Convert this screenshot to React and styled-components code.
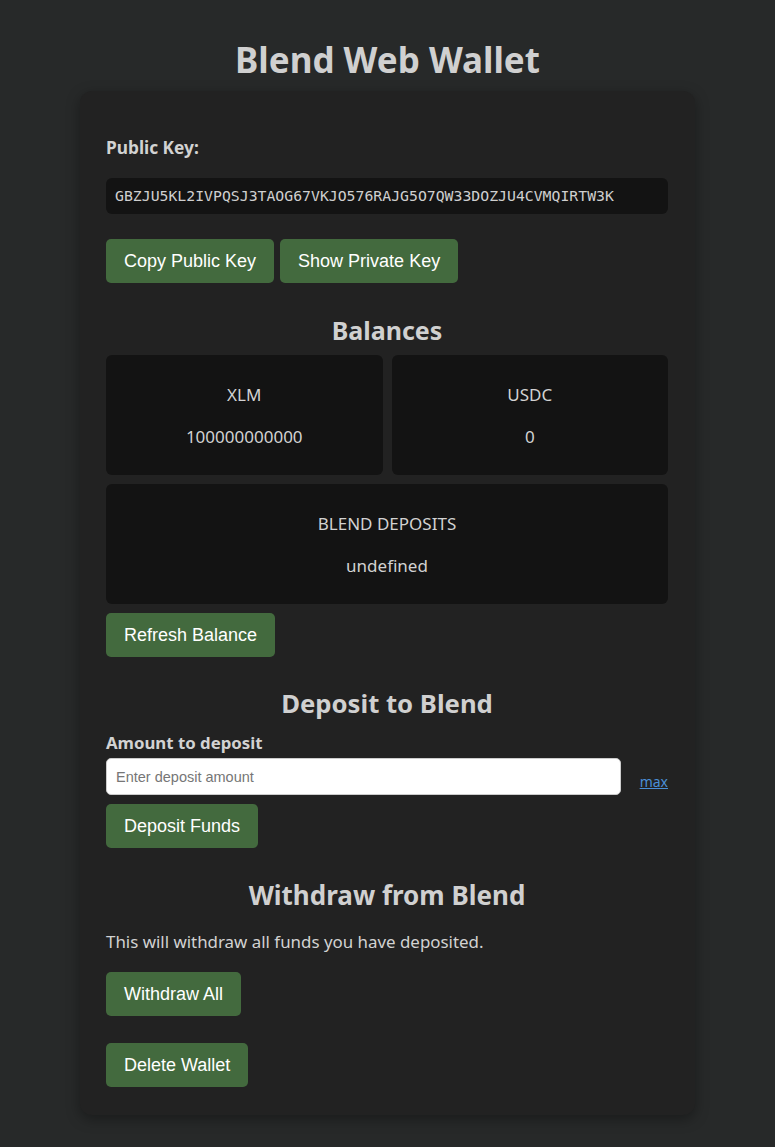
import React from "react";
import styled, { createGlobalStyle } from "styled-components";

const Global = createGlobalStyle`
  html, body { margin: 0; padding: 0; }
  body {
    background: #272929;
    color: #d2d2d2;
    font-family: "Noto Sans", "Open Sans", sans-serif;
  }
`;

const Page = styled.div`
  padding: 38px 0 34px;
  display: flex;
  flex-direction: column;
  align-items: center;
`;

const Title = styled.h1`
  margin: 0 0 9px;
  font-size: 35px;
  line-height: 44px;
  font-weight: 700;
  color: #d0d0d0;
  text-align: center;
`;

const Card = styled.main`
  box-sizing: border-box;
  width: 615px;
  background: #222222;
  border-radius: 12px;
  padding: 26px 27px 28px 26px;
  box-shadow: 0 4px 14px rgba(0, 0, 0, 0.35);
  display: flex;
  flex-direction: column;
  align-items: flex-start;
`;

const Label = styled.div`
  font-size: ${(p) => p.$size || 16.8}px;
  line-height: 22px;
  font-weight: 700;
  margin-top: ${(p) => p.$mt || 0}px;
  color: #d2d2d2;
`;

const KeyBox = styled.div`
  box-sizing: border-box;
  align-self: stretch;
  margin-top: 19px;
  background: #131313;
  border-radius: 6px;
  padding: 9px 9px;
  font-family: "DejaVu Sans Mono", "Liberation Mono", monospace;
  font-size: 14.8px;
  line-height: 18px;
  color: #cfcfcf;
`;

const ButtonRow = styled.div`
  display: flex;
  gap: 6px;
  margin-top: ${(p) => p.$mt || 0}px;
`;

const Button = styled.button`
  box-sizing: border-box;
  height: 44px;
  padding: 0 18px;
  border: none;
  border-radius: 5px;
  background: #436a3e;
  color: #ffffff;
  font-family: "Liberation Sans", Arial, sans-serif;
  font-size: 18px;
  cursor: pointer;
  margin-top: ${(p) => p.$mt || 0}px;
`;

const Heading = styled.h2`
  align-self: stretch;
  margin: ${(p) => p.$mt || 0}px 0 0;
  font-size: ${(p) => p.$size || 25.7}px;
  line-height: 32px;
  font-weight: 700;
  text-align: center;
  color: #d0d0d0;
`;

const BalanceGrid = styled.div`
  align-self: stretch;
  margin-top: 9px;
  display: grid;
  grid-template-columns: 1fr 1fr;
  gap: 9px;
`;

const BalanceCard = styled.div`
  grid-column: ${(p) => (p.$wide ? "1 / -1" : "auto")};
  height: 120px;
  background: #131313;
  border-radius: 6px;
  display: flex;
  flex-direction: column;
  align-items: center;
  justify-content: center;
  gap: 18px;
  padding-top: 2px;
  box-sizing: border-box;
  font-size: 17px;
  line-height: 24px;
  color: #d2d2d2;
`;

const InputRow = styled.div`
  align-self: stretch;
  margin-top: 4px;
  display: flex;
  align-items: flex-end;
  gap: 19px;
`;

const Input = styled.input`
  box-sizing: border-box;
  flex: 1;
  height: 37px;
  border: 1px solid #cccccc;
  border-radius: 5px;
  padding: 0 9px;
  background: #ffffff;
  font-family: "Liberation Sans", Arial, sans-serif;
  font-size: 14.5px;
  &::placeholder { color: #767676; }
`;

const MaxLink = styled.a`
  font-size: 14px;
  line-height: 20px;
  margin-bottom: 3px;
  color: #4a8fd6;
  text-decoration: underline;
  cursor: pointer;
`;

const Text = styled.p`
  margin: 20px 0 0;
  font-size: 16.9px;
  line-height: 22px;
  color: #d2d2d2;
`;

export default function App() {
  return (
    <>
      <Global />
      <Page>
        <Title>Blend Web Wallet</Title>
        <Card>
          <Label $mt={20} $size={17.3}>Public Key:</Label>
          <KeyBox>GBZJU5KL2IVPQSJ3TAOG67VKJO576RAJG5O7QW33DOZJU4CVMQIRTW3K</KeyBox>
          <ButtonRow $mt={25}>
            <Button>Copy Public Key</Button>
            <Button>Show Private Key</Button>
          </ButtonRow>

          <Heading $mt={31} $size={25}>Balances</Heading>
          <BalanceGrid>
            <BalanceCard>
              <span>XLM</span>
              <span>100000000000</span>
            </BalanceCard>
            <BalanceCard>
              <span>USDC</span>
              <span>0</span>
            </BalanceCard>
            <BalanceCard $wide>
              <span>BLEND DEPOSITS</span>
              <span>undefined</span>
            </BalanceCard>
          </BalanceGrid>
          <Button $mt={9}>Refresh Balance</Button>

          <Heading $mt={31}>Deposit to Blend</Heading>
          <Label $mt={12}>Amount to deposit</Label>
          <InputRow>
            <Input placeholder="Enter deposit amount" />
            <MaxLink>max</MaxLink>
          </InputRow>
          <Button $mt={9}>Deposit Funds</Button>

          <Heading $mt={31} $size={26}>Withdraw from Blend</Heading>
          <Text>This will withdraw all funds you have deposited.</Text>
          <Button $mt={19}>Withdraw All</Button>
          <Button $mt={27}>Delete Wallet</Button>
        </Card>
      </Page>
    </>
  );
}
